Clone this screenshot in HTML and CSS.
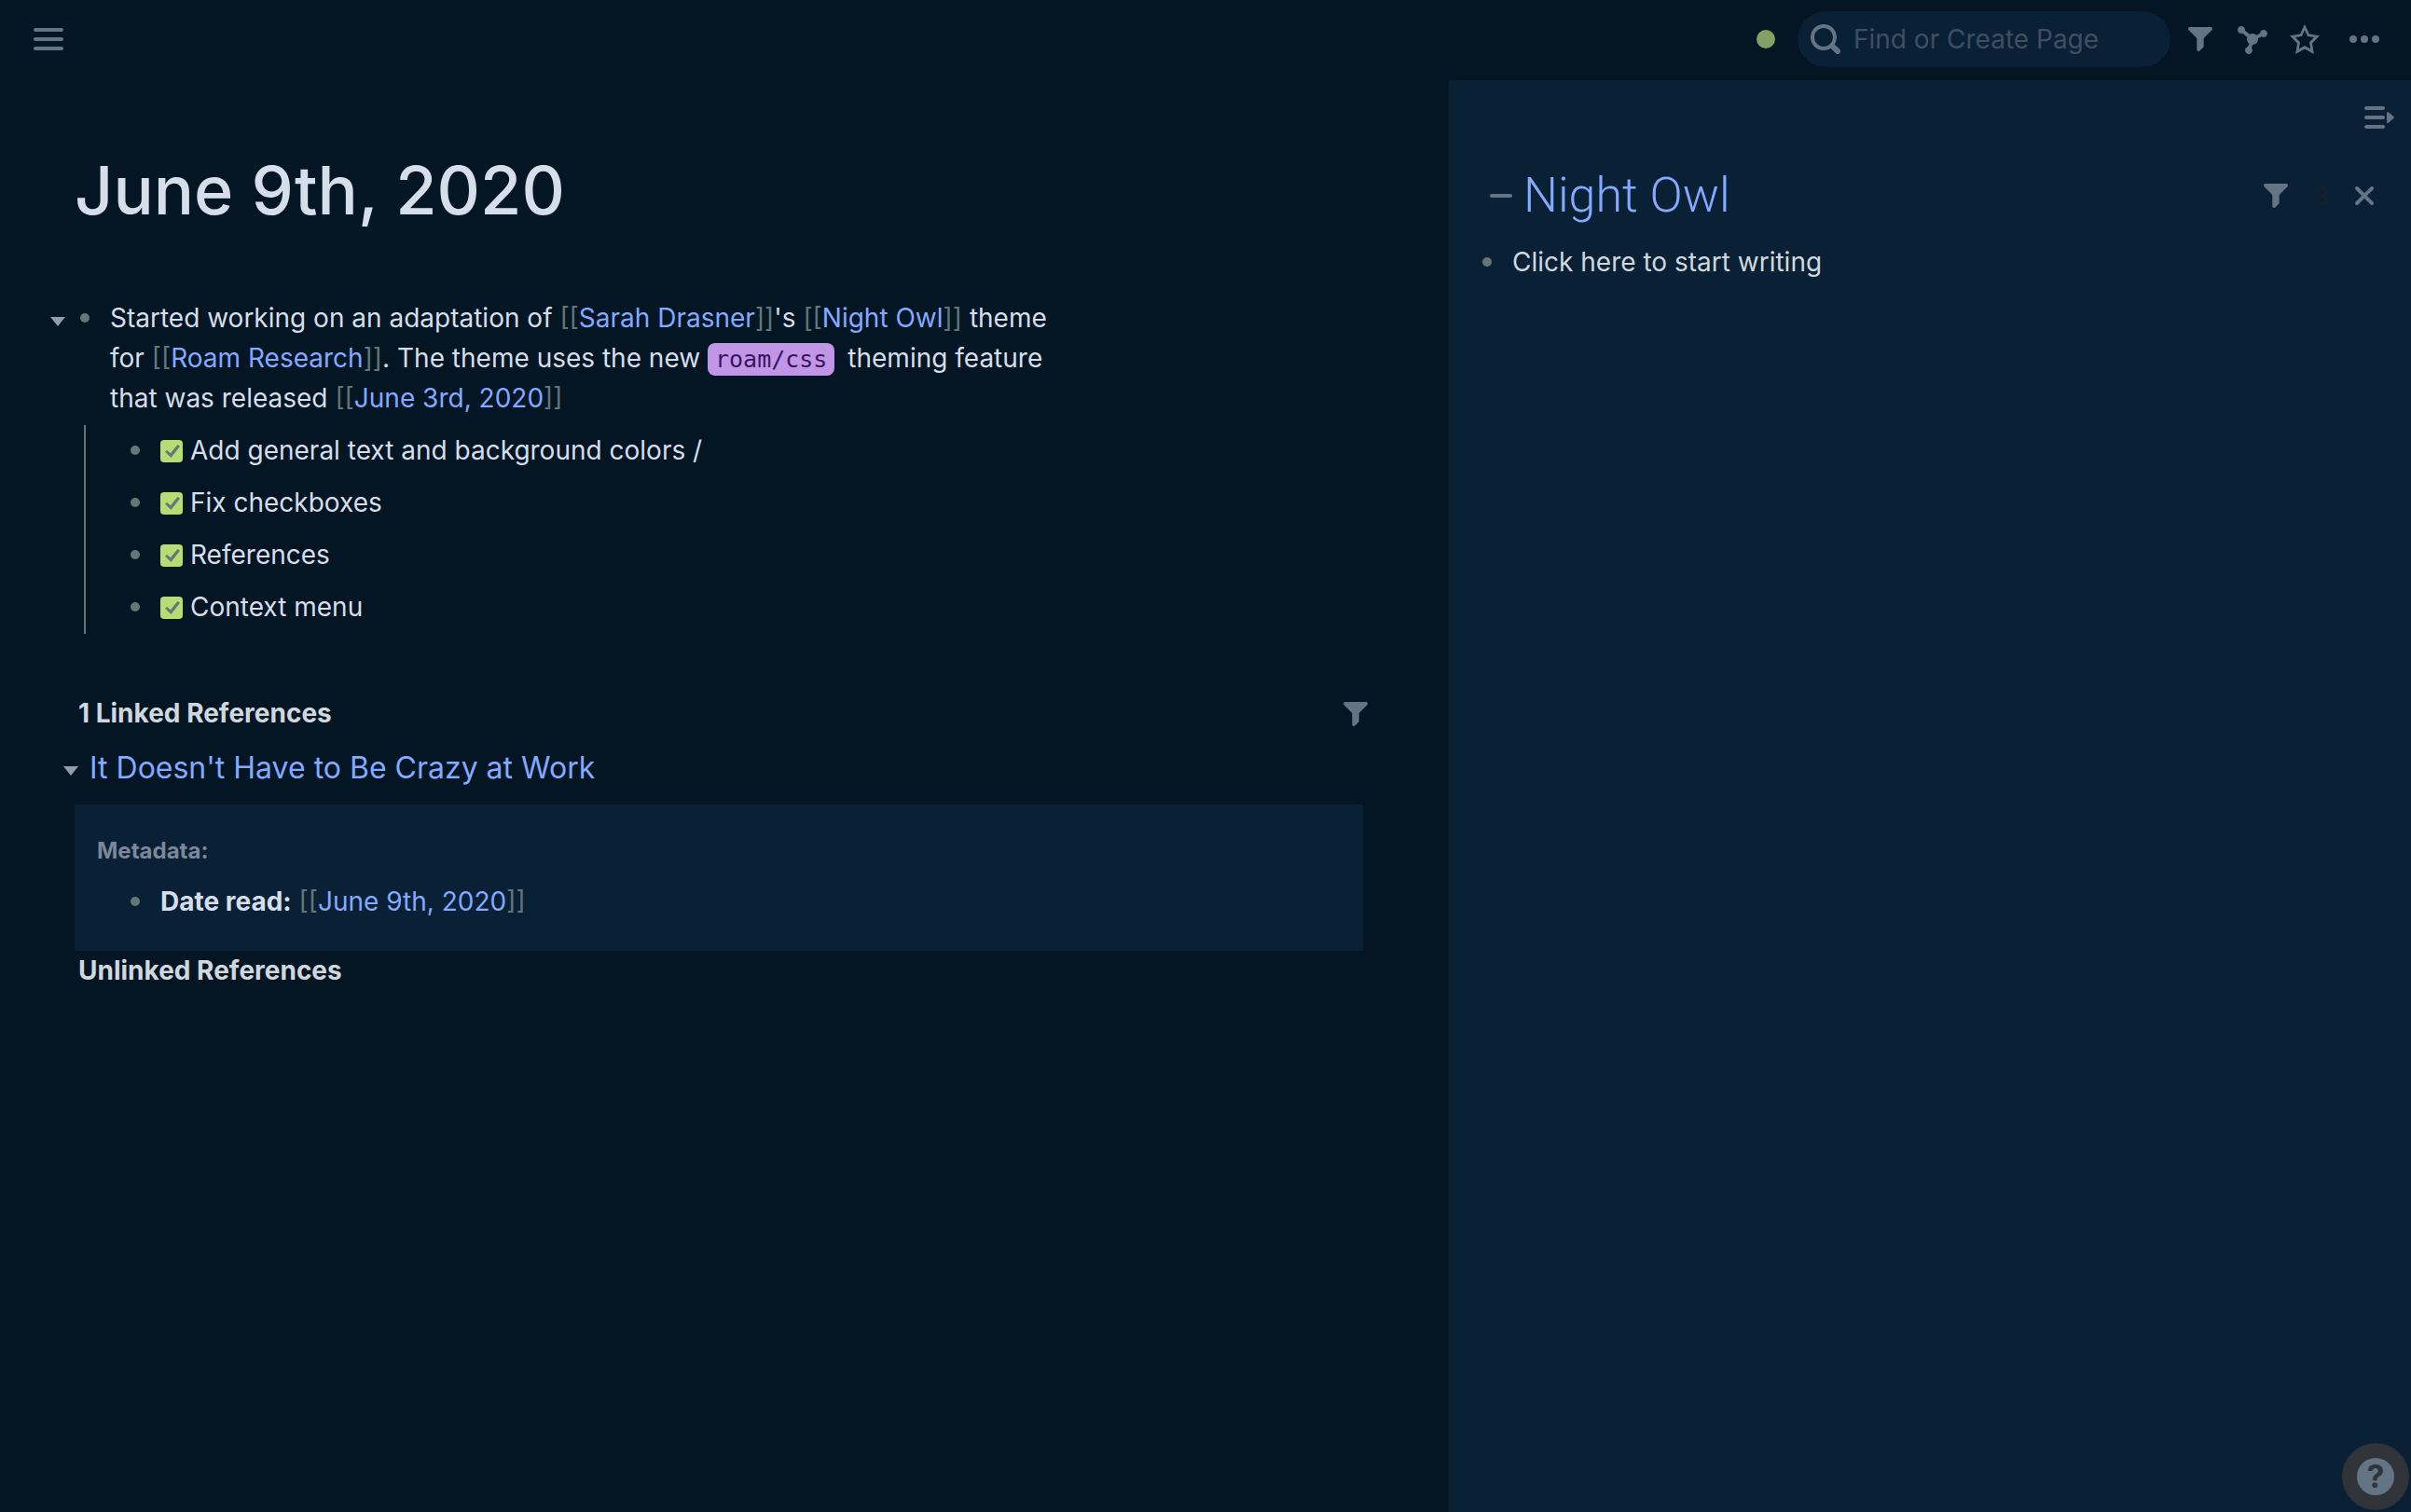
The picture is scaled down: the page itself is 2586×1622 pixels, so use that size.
FILE: index.html
```html
<!DOCTYPE html>
<html lang="en">
<head>
<meta charset="utf-8">
<meta name="viewport" content="width=device-width, initial-scale=1">
<title>June 9th, 2020</title>
<link rel="stylesheet" href="styles.css">
</head>
<body>
<svg class="sprite" aria-hidden="true">
  <symbol id="filter" viewBox="1 1 14 14"><path d="M13.99.99h-12a1.003 1.003 0 00-.71 1.71l4.71 4.71V14a1.003 1.003 0 001.71.71l2-2c.18-.18.29-.43.29-.71V7.41L14.7 2.7a1.003 1.003 0 00-.71-1.71z"/></symbol>
</svg>
<div class="app">
  <header class="topbar">
    <button class="icon-button" aria-label="Open menu">
      <svg class="icon" viewBox="0 0 32 32"><rect y="4" width="32" height="4" rx="2"/><rect y="14" width="32" height="4" rx="2"/><rect y="24" width="32" height="4" rx="2"/></svg>
    </button>
    <div class="tools">
      <span class="status" role="img" aria-label="Synced"></span>
      <label class="search">
        <svg class="icon" viewBox="0 0 16 16"><path d="M15.55 13.43l-2.67-2.68a6.94 6.94 0 001.11-3.76c0-3.87-3.13-7-7-7s-7 3.13-7 7 3.13 7 7 7c1.39 0 2.68-.42 3.76-1.11l2.68 2.67a1.498 1.498 0 102.12-2.12zm-8.56-1.44c-2.76 0-5-2.24-5-5s2.24-5 5-5 5 2.24 5 5-2.24 5-5 5z"/></svg>
        <input class="search-input" type="text" placeholder="Find or Create Page" aria-label="Find or Create Page">
      </label>
      <button class="icon-button tool" aria-label="Filter"><svg class="icon icon-filter"><use href="#filter"/></svg></button>
      <button class="icon-button tool" aria-label="Graph">
        <svg class="icon" viewBox="0 0 16 16"><path d="M14 3c-1.06 0-1.92.83-1.99 1.88l-1.93.97A2.95 2.95 0 008 5c-.56 0-1.08.16-1.52.43L3.97 3.34C3.98 3.23 4 3.12 4 3c0-1.1-.9-2-2-2s-2 .9-2 2 .9 2 2 2c.24 0 .47-.05.68-.13l2.51 2.09C5.08 7.29 5 7.63 5 8c0 .96.46 1.81 1.16 2.35l-.56 1.69c-.91.19-1.6.99-1.6 1.96 0 1.1.9 2 2 2s2-.9 2-2c0-.51-.2-.97-.51-1.32l.56-1.69C9.71 11 11 9.66 11 8c0-.12-.02-.24-.04-.36l1.94-.97c.32.2.69.33 1.1.33 1.1 0 2-.9 2-2s-.9-2-2-2z"/></svg>
      </button>
      <button class="icon-button tool" aria-label="Star page">
        <svg class="icon" viewBox="0 0 16 16"><path fill-rule="evenodd" d="M16 6.11l-5.53-.84L8 0 5.53 5.27 0 6.11l4 4.1L3.06 16 8 13.27 12.94 16 12 10.21l4-4.1zM4.91 13.2l.59-3.62L3 7.02l3.45-.53L8 3.2l1.55 3.29 3.45.53-2.5 2.56.59 3.62L8 11.49 4.91 13.2z"/></svg>
      </button>
      <button class="icon-button tool more" aria-label="More">
        <svg class="icon" viewBox="0 0 16 16"><circle cx="2" cy="8" r="2"/><circle cx="8" cy="8" r="2"/><circle cx="14" cy="8" r="2"/></svg>
      </button>
    </div>
  </header>

  <main class="article">
    <h1 class="page-title">June 9th, 2020</h1>
    <div class="block">
      <button class="caret" aria-label="Collapse"></button>
      <span class="bullet"></span>
      <p class="text">Started working on an adaptation of <span class="bracket">[[</span><a href="#">Sarah Drasner</a><span class="bracket">]]</span>'s <span class="bracket">[[</span><a href="#">Night Owl</a><span class="bracket">]]</span> theme for <span class="bracket">[[</span><a href="#">Roam Research</a><span class="bracket">]]</span>. The theme uses the new <code>roam/css</code> theming feature that was released <span class="bracket">[[</span><a href="#">June 3rd, 2020</a><span class="bracket">]]</span></p>
    </div>
    <ul class="children">
      <li class="child"><span class="bullet"></span><label class="task"><input class="check" type="checkbox" checked>Add general text and background colors /</label></li>
      <li class="child"><span class="bullet"></span><label class="task"><input class="check" type="checkbox" checked>Fix checkboxes</label></li>
      <li class="child"><span class="bullet"></span><label class="task"><input class="check" type="checkbox" checked>References</label></li>
      <li class="child"><span class="bullet"></span><label class="task"><input class="check" type="checkbox" checked>Context menu</label></li>
    </ul>

    <section class="references">
      <div class="ref-head">
        <h2 class="ref-title">1 Linked References</h2>
        <button class="icon-button" aria-label="Filter references"><svg class="icon icon-filter"><use href="#filter"/></svg></button>
      </div>
      <div class="ref-page">
        <button class="caret" aria-label="Collapse"></button>
        <a href="#">It Doesn't Have to Be Crazy at Work</a>
      </div>
      <div class="ref-card">
        <div class="crumb">Metadata:</div>
        <div class="child"><span class="bullet"></span><p class="text"><strong>Date read:</strong> <span class="bracket">[[</span><a href="#">June 9th, 2020</a><span class="bracket">]]</span></p></div>
      </div>
      <h2 class="ref-title">Unlinked References</h2>
    </section>
  </main>

  <aside class="sidebar">
    <div class="sidebar-top">
      <button class="icon-button" aria-label="Close sidebar">
        <svg class="icon" viewBox="0 0 32 32"><rect y="4" width="22" height="4" rx="2"/><rect y="14" width="22" height="4" rx="2"/><rect y="24" width="22" height="4" rx="2"/><path d="M24 11.500q0-2.500 2-1l5.400 4.500q1 1 0 2l-5.400 4.500q-2 1.500-2-1z"/></svg>
      </button>
    </div>
    <div class="pane-head">
      <button class="icon-button" aria-label="Collapse pane"><svg class="icon icon-dash" viewBox="0 0 24 24"><rect y="10" width="24" height="4" rx="2"/></svg></button>
      <h2 class="pane-title"><a href="#">Night Owl</a></h2>
      <button class="icon-button" aria-label="Filter pane"><svg class="icon icon-filter"><use href="#filter"/></svg></button>
      <span class="count">3</span>
      <button class="icon-button" aria-label="Close pane"><svg class="icon icon-close" viewBox="0 0 20 20"><path class="stroke" d="M2 2l16 16M18 2L2 18"/></svg></button>
    </div>
    <div class="pane-block"><span class="bullet"></span><p class="text">Click here to start writing</p></div>
  </aside>
</div>
<button class="help" aria-label="Help"><span class="help-mark">?</span></button>
</body>
</html>
```
FILE: styles.css
```css
:root {
  --bg: #041524;
  --panel: #092035;
  --text: #d6deeb;
  --muted: #d0d8de;
  --link: #82aaff;
  --gray: #637777;
  --icon: #637485;
}

* { box-sizing: border-box; }

body {
  margin: 0;
  background: var(--bg);
  color: var(--text);
  font-family: Inter, "Liberation Sans", sans-serif;
  font-size: 28px;
  line-height: 43px;
}

h1, h2, p, ul { margin: 0; padding: 0; }
ul { list-style: none; }
a { color: var(--link); text-decoration: none; }

button {
  padding: 0;
  border: 0;
  background: none;
  color: inherit;
  font: inherit;
}

.sprite { display: none; }

.app {
  display: grid;
  grid-template: 86px 1fr / 259fr 172fr;
  min-height: 100vh;
}

.icon {
  display: block;
  width: 32px;
  height: 32px;
  fill: var(--icon);
}
.icon-filter { width: 26px; height: 26px; }
.icon-dash { width: 24px; height: 24px; }
.icon-close { width: 20px; height: 20px; }
.stroke { stroke: var(--icon); stroke-width: 4; stroke-linecap: round; }

.topbar {
  grid-column: 1 / -1;
  display: flex;
  align-items: center;
  justify-content: space-between;
  padding: 0 34px 2px 36px;
}
.tools { display: flex; align-items: center; gap: 24px; }
.tool { display: flex; justify-content: center; width: 32px; }
.status { width: 20px; height: 20px; border-radius: 50%; background: #84a062; }
.more { margin-left: 8px; }

.search {
  display: flex;
  align-items: center;
  gap: 14px;
  width: 400px;
  height: 60px;
  margin-right: -8px;
  padding: 0 14px;
  border-radius: 30px;
  background: var(--panel);
}
.search-input {
  flex: 1;
  min-width: 0;
  padding: 0;
  border: 0;
  outline: 0;
  background: none;
  color: var(--text);
  font: inherit;
}
.search-input::placeholder { color: #3e4f62; opacity: 1; }

.article { padding: 73px 92px 40px 54px; }
.page-title {
  margin-left: 26px;
  font-size: 72px;
  line-height: 90px;
  font-weight: 500;
}

.block { display: flex; margin-top: 71px; }
.caret {
  flex: none;
  width: 16px;
  height: 10px;
  margin-top: 20px;
  background: #929dab;
  clip-path: polygon(0 0, 100% 0, 50% 100%);
}
.bullet {
  flex: none;
  width: 10px;
  height: 10px;
  margin-top: 16px;
  border-radius: 50%;
  background: var(--gray);
}
.block .bullet { margin-left: 16px; }
.block .text { margin-left: 22px; max-width: 1036px; }
.bracket { color: var(--gray); }

code {
  margin-right: 6px;
  padding: 3px 8px;
  border-radius: 8px;
  background: #c196e6;
  color: #3c1361;
  font-family: "DejaVu Sans Mono", monospace;
  font-size: 25px;
  line-height: 28px;
}

.children {
  margin: 7px 0 0 36px;
  padding-left: 48px;
  border-left: 2px solid var(--gray);
}
.child { display: flex; gap: 22px; height: 56px; padding-top: 6px; }
.task { display: flex; gap: 8px; }

.check {
  appearance: none;
  width: 24px;
  height: 24px;
  margin: 10px 0 0;
  border-radius: 4px;
  background: #b8dc74;
}
.check:checked::before {
  content: "";
  display: block;
  width: 16px;
  height: 14px;
  margin: 5px 0 0 5px;
  background: #637777;
  clip-path: polygon(0 53%, 14% 42%, 37% 66%, 84% 0, 100% 12%, 40% 100%);
}

.references { margin: 64px 0 0 26px; }
.ref-head { display: flex; justify-content: space-between; align-items: center; margin-right: -5px; }
.ref-title {
  margin-left: 4px;
  color: var(--muted);
  font-size: 28px;
  line-height: 43px;
  font-weight: 700;
}
.ref-page {
  display: flex;
  gap: 12px;
  margin: 15px 0 0 -12px;
  font-size: 32px;
}
.ref-card {
  margin-top: 18px;
  padding: 29px 24px 24px;
  background: var(--panel);
}
.crumb {
  margin-bottom: 6px;
  color: #7c889a;
  font-size: 24px;
  line-height: 42px;
  font-weight: 700;
}
.ref-card .child { margin-left: 36px; }

.sidebar { padding: 24px 18px 40px 36px; background: var(--panel); }
.sidebar-top { display: flex; justify-content: flex-end; }
.pane-head { display: flex; align-items: center; margin: 36px 22px 0 8px; }
.pane-title {
  flex: 1;
  margin-left: 12px;
  font-family: Roboto, sans-serif;
  font-size: 52px;
  line-height: 64px;
  font-weight: 300;
}
.count {
  margin: 0 28px;
  color: #182026;
  font-family: Roboto, sans-serif;
}
.pane-block { display: flex; gap: 22px; margin-top: 18px; }
.pane-block .text { color: var(--muted); }

.help {
  position: fixed;
  right: 2px;
  bottom: 2px;
  display: grid;
  place-items: center;
  width: 72px;
  height: 72px;
  border-radius: 50%;
  background: #303438;
}
.help-mark {
  width: 40px;
  height: 40px;
  border-radius: 50%;
  background: #637485;
  color: #303438;
  font-size: 34px;
  line-height: 40px;
  font-weight: 700;
}
```
